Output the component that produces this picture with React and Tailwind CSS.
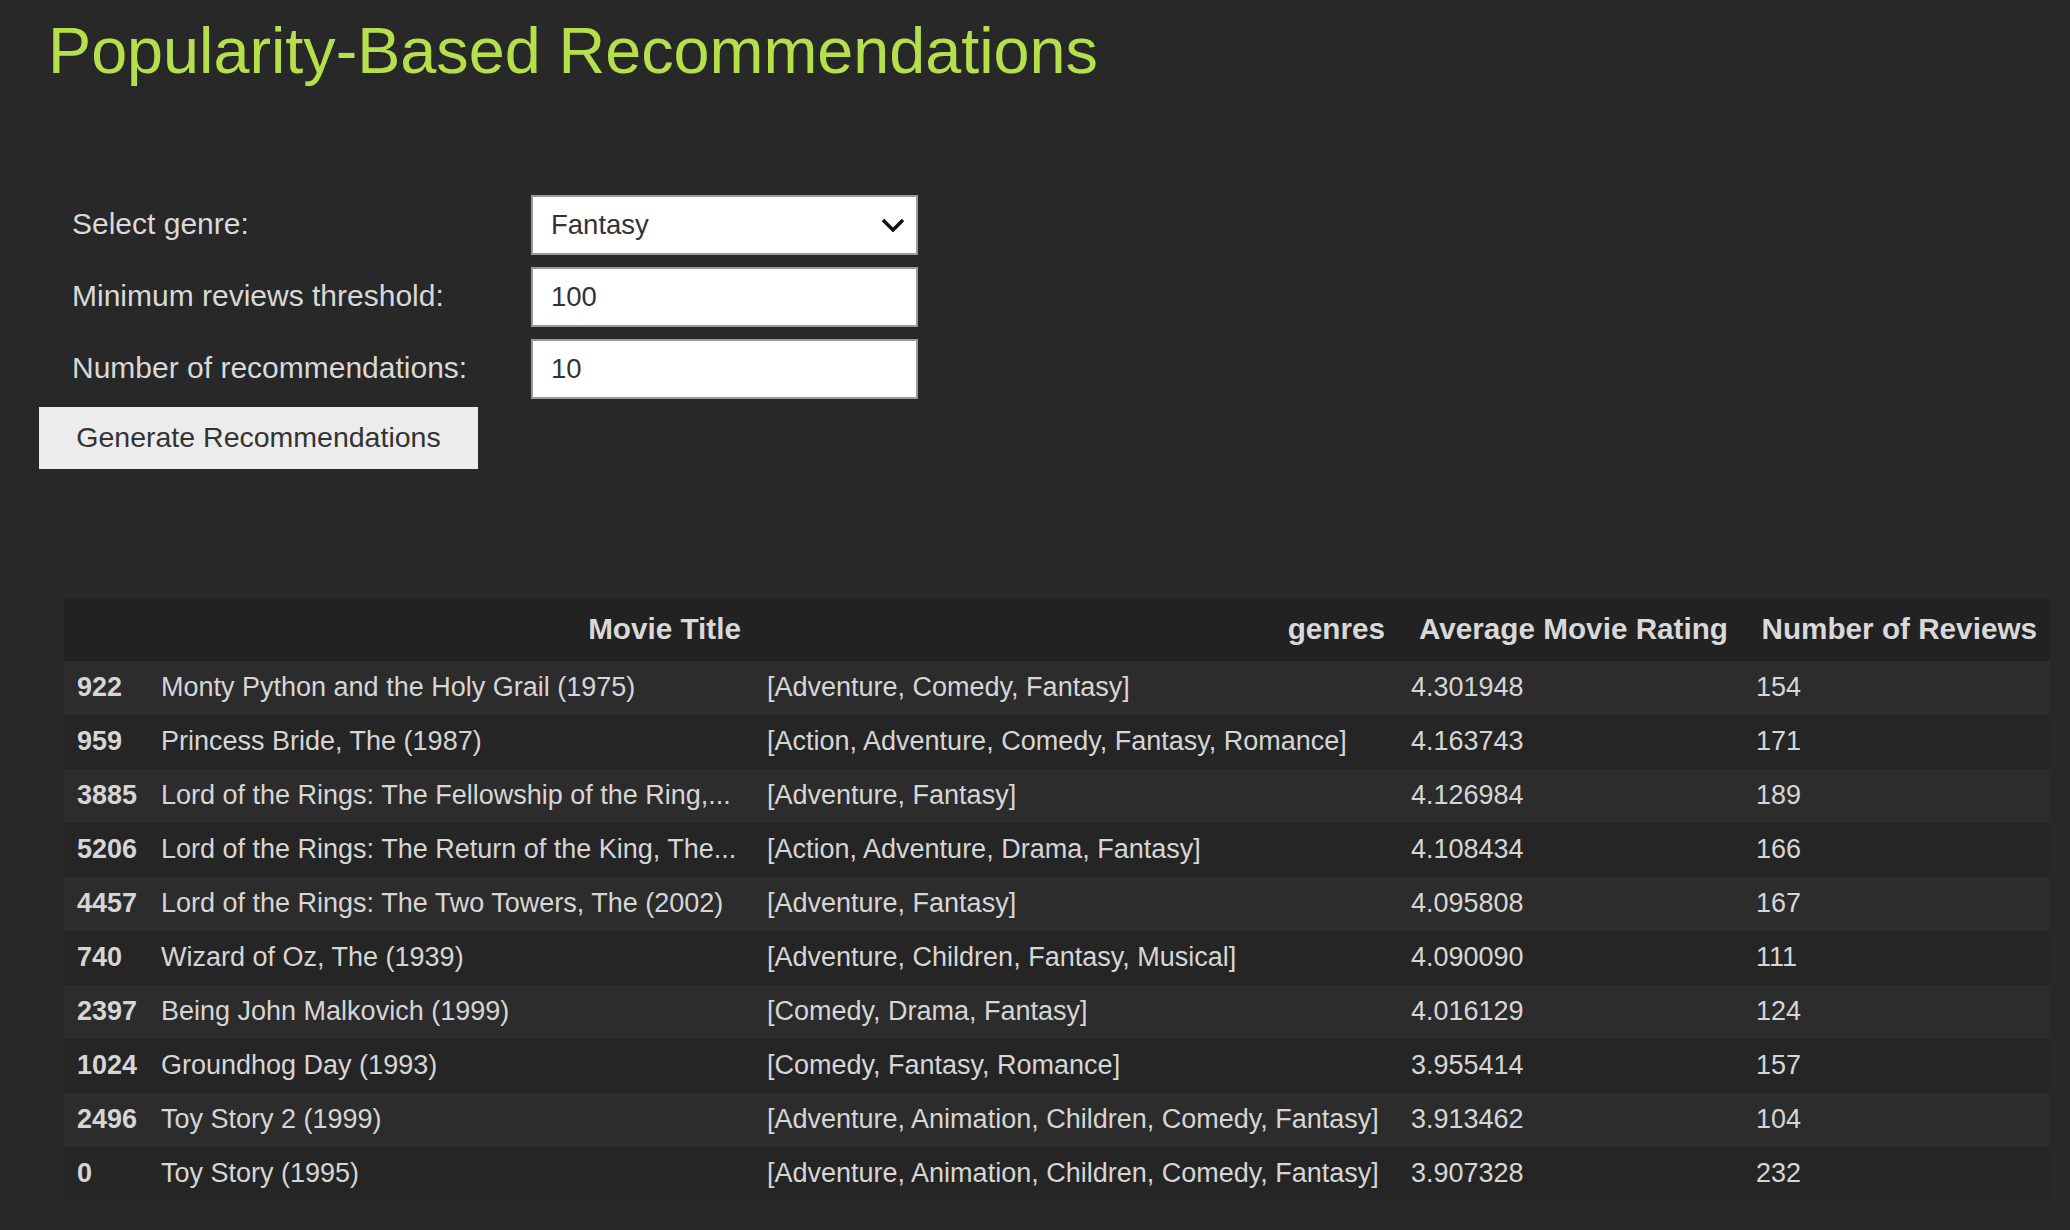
const rows = [
  ['922', 'Monty Python and the Holy Grail (1975)', '[Adventure, Comedy, Fantasy]', '4.301948', '154'],
  ['959', 'Princess Bride, The (1987)', '[Action, Adventure, Comedy, Fantasy, Romance]', '4.163743', '171'],
  ['3885', 'Lord of the Rings: The Fellowship of the Ring,...', '[Adventure, Fantasy]', '4.126984', '189'],
  ['5206', 'Lord of the Rings: The Return of the King, The...', '[Action, Adventure, Drama, Fantasy]', '4.108434', '166'],
  ['4457', 'Lord of the Rings: The Two Towers, The (2002)', '[Adventure, Fantasy]', '4.095808', '167'],
  ['740', 'Wizard of Oz, The (1939)', '[Adventure, Children, Fantasy, Musical]', '4.090090', '111'],
  ['2397', 'Being John Malkovich (1999)', '[Comedy, Drama, Fantasy]', '4.016129', '124'],
  ['1024', 'Groundhog Day (1993)', '[Comedy, Fantasy, Romance]', '3.955414', '157'],
  ['2496', 'Toy Story 2 (1999)', '[Adventure, Animation, Children, Comedy, Fantasy]', '3.913462', '104'],
  ['0', 'Toy Story (1995)', '[Adventure, Animation, Children, Comedy, Fantasy]', '3.907328', '232'],
];

function Field({ label, children }) {
  return (
    <div className="flex h-[60px] items-center">
      <label className="w-[531px] shrink-0 whitespace-nowrap pb-[2px] pl-[72px] text-[30px] text-[#d9d9d9]">{label}</label>
      <div className="flex h-[60px] w-[387px] shrink-0 items-center border-2 border-[#999999] bg-white pl-[18px] pr-[10px] text-[27.5px] text-[#333333]">
        {children}
      </div>
    </div>
  );
}

export default function App() {
  return (
    <div className="min-h-screen bg-[#282828] pb-[40px] font-['Liberation_Sans',Arial,sans-serif]">
      <h1 className="pl-[48px] pt-[19px] text-[64.7px] leading-none text-[#b5e04b]">
        Popularity-Based Recommendations
      </h1>

      <div className="mt-[111px] flex flex-col gap-[12px]">
        <Field label="Select genre:">
          <span className="flex-1">Fantasy</span>
          <svg width="24" height="14" viewBox="0 0 24 14" className="mr-[1px]">
            <polyline points="2,2 12,12 22,2" fill="none" stroke="#111" strokeWidth="3.5" />
          </svg>
        </Field>
        <Field label="Minimum reviews threshold:">100</Field>
        <Field label="Number of recommendations:">10</Field>
      </div>

      <button className="ml-[39px] mt-[8px] h-[62px] w-[439px] bg-[#ececec] text-[28.5px] text-[#333333]">
        Generate Recommendations
      </button>

      <table className="ml-[64px] mt-[130px] w-[1986px] table-fixed border-collapse text-[27px] text-[#d6d6d6]">
        <colgroup>
          <col className="w-[84px]" />
          <col className="w-[606px]" />
          <col className="w-[644px]" />
          <col className="w-[345px]" />
          <col className="w-[307px]" />
        </colgroup>
        <thead>
          <tr className="h-[62px] bg-[#222222] text-[29.7px] font-bold text-[#d9d9d9]">
            <th></th>
            <th className="pr-[13px] text-right">Movie Title</th>
            <th className="pr-[13px] text-right">genres</th>
            <th className="pr-[15px] text-right">Average Movie Rating</th>
            <th className="pr-[13px] text-right">Number of Reviews</th>
          </tr>
        </thead>
        <tbody>
          {rows.map((r, i) => (
            <tr key={r[0]} className={i % 2 === 0 ? 'h-[54px] bg-[#2c2c2c]' : 'h-[54px] bg-[#252525]'}>
              <td className="pl-[13px] font-bold">{r[0]}</td>
              <td className="whitespace-nowrap pl-[13px]">{r[1]}</td>
              <td className="whitespace-nowrap pl-[13px]">{r[2]}</td>
              <td className="pl-[13px]">{r[3]}</td>
              <td className="pl-[13px]">{r[4]}</td>
            </tr>
          ))}
        </tbody>
      </table>
    </div>
  );
}
